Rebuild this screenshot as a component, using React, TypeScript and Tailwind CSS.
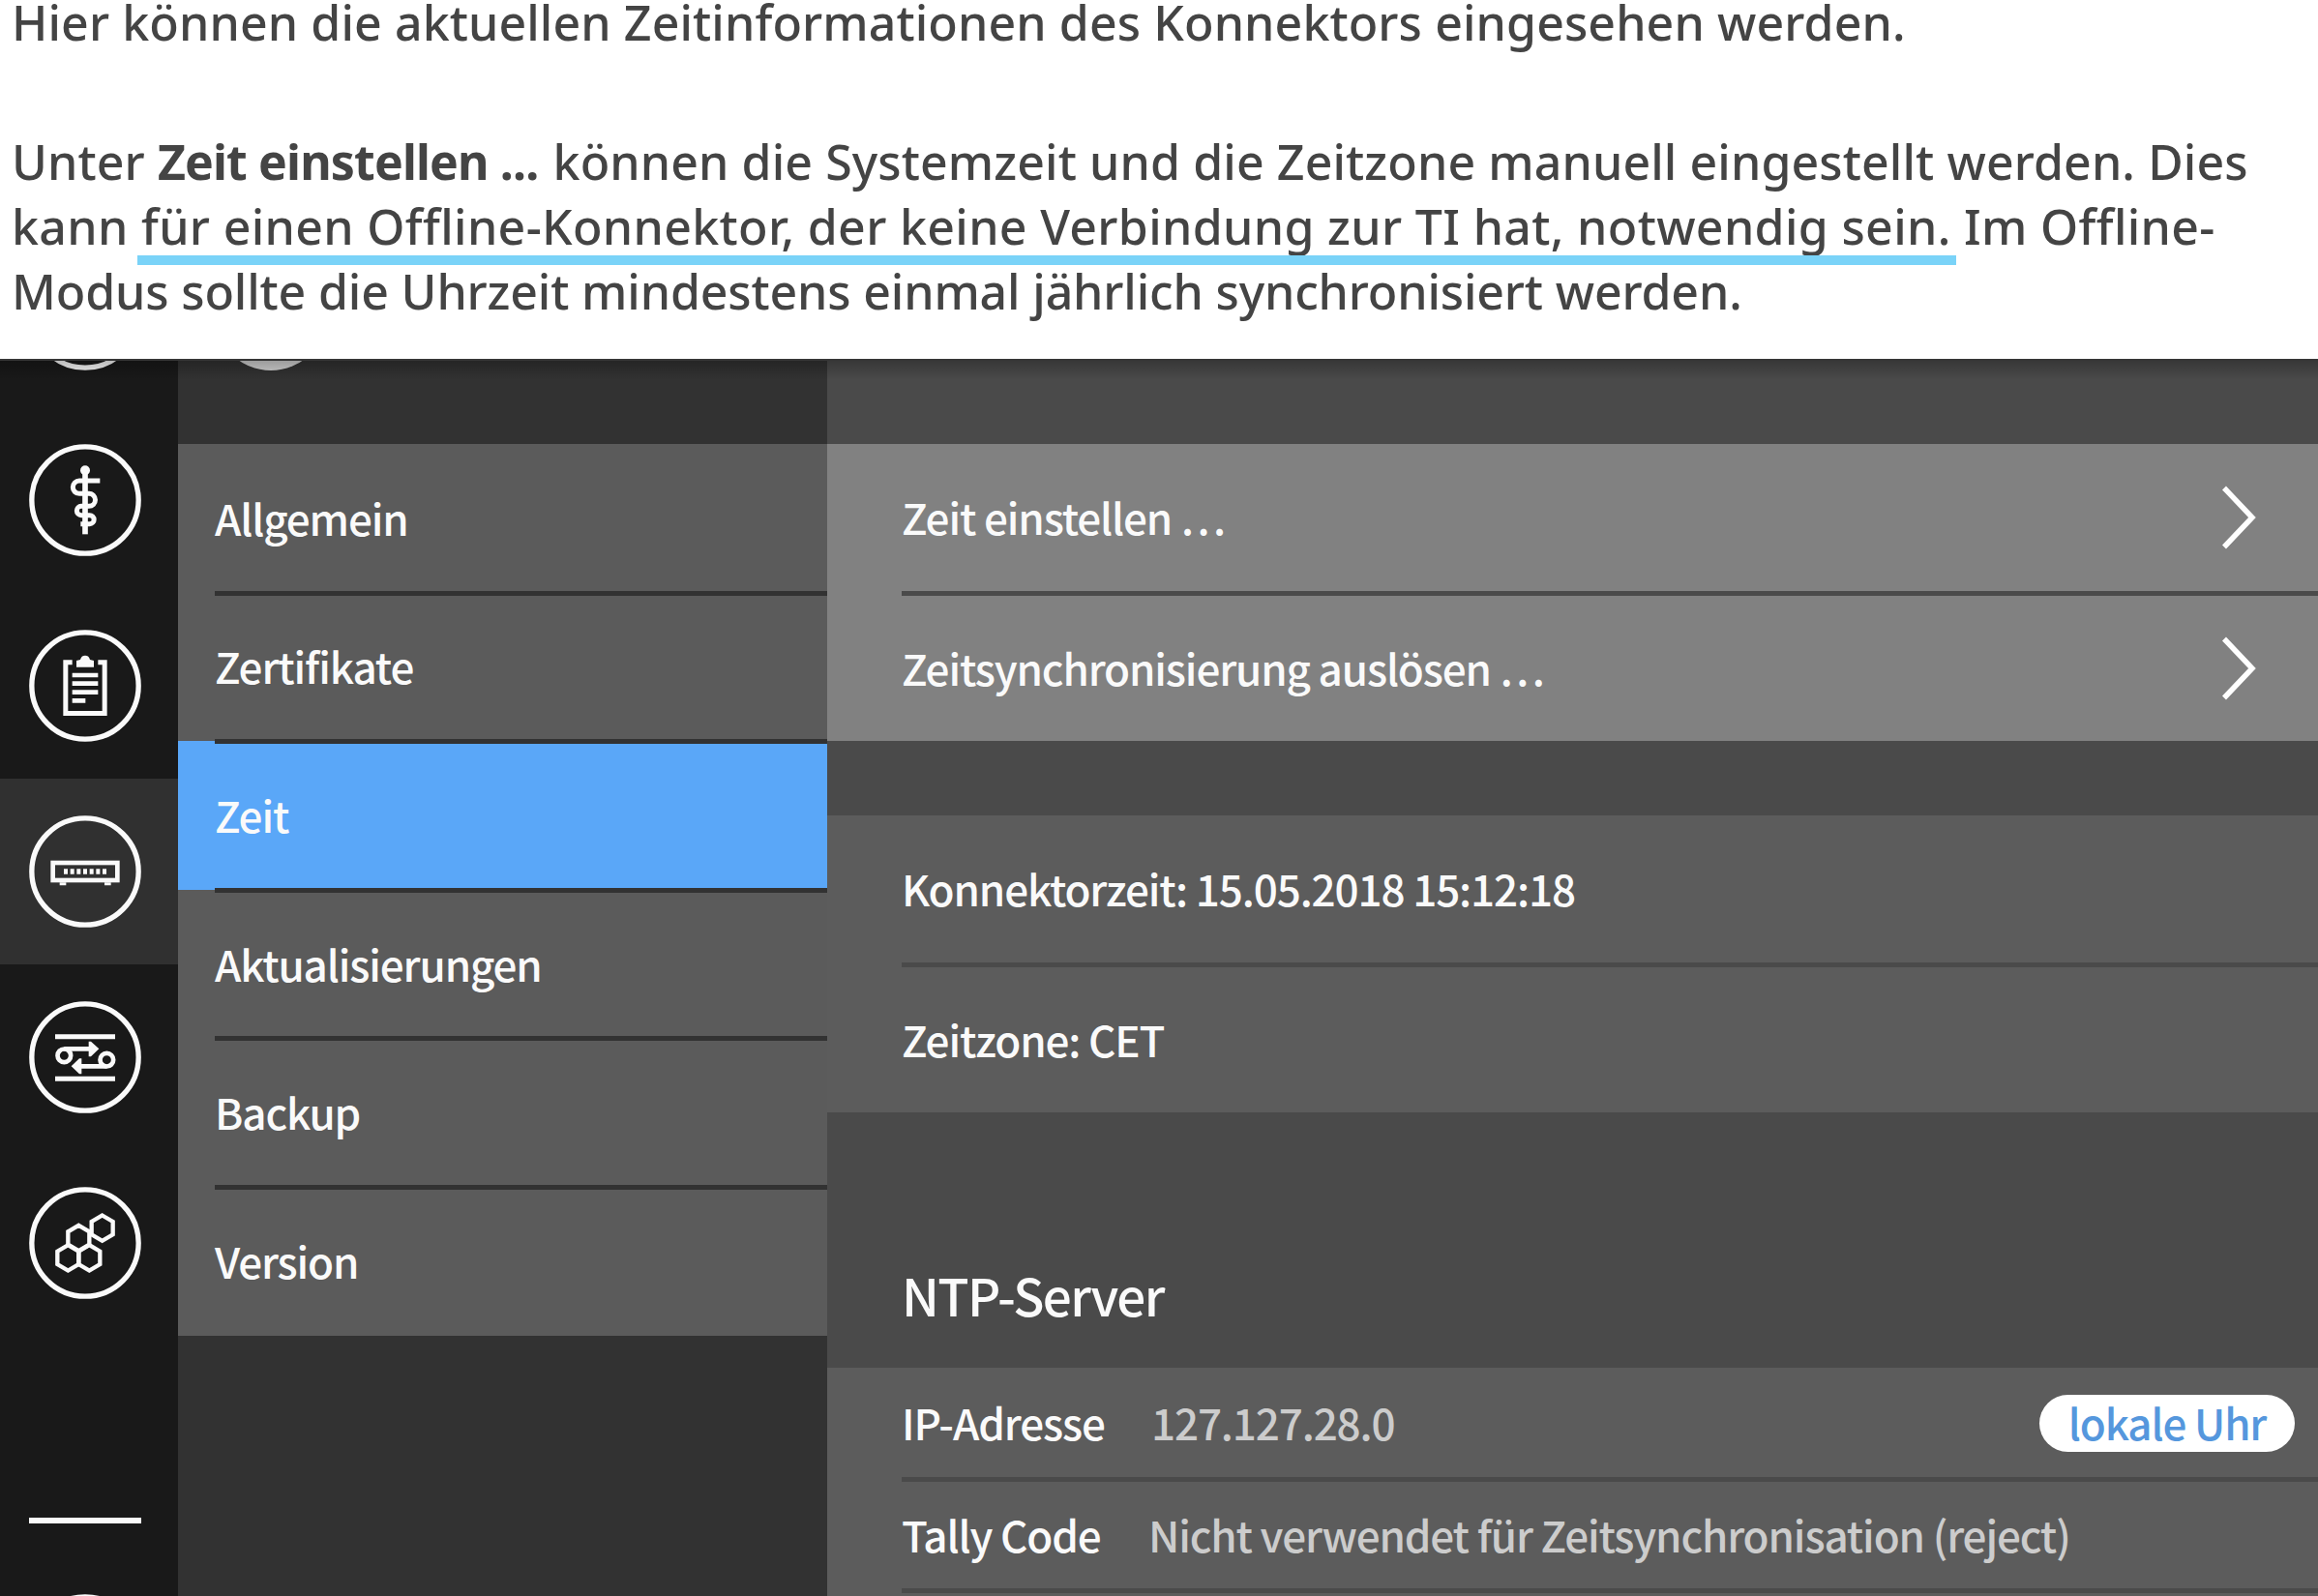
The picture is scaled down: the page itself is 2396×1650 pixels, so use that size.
import type { ReactNode } from "react";

function RoundIcon({ children }: { children?: ReactNode }) {
  return (
    <svg
      viewBox="-174 -174 348 348"
      className="block size-[116px] shrink-0"
      fill="none"
      stroke="#fafafa"
      strokeWidth={14}
    >
      <circle r={165.5} strokeWidth={16} />
      {children}
    </svg>
  );
}

const hexagon = "M0 -39.5L33 -20V20L0 39.5L-33 20V-20Z";

const railIcons: { name: string; active?: boolean; drawing: ReactNode }[] = [
  {
    name: "praxis",
    drawing: (
      <>
        <circle cy={-92} r={15} fill="#fafafa" stroke="none" />
        <path d="M0 -92V106" strokeWidth={17} />
        <path
          d="M46 -60H-18A20 20 0 0 0 -18 -20H12A19.5 19.5 0 0 1 12 19H-12A14 14 0 0 0 -12 47H14A13.5 13.5 0 0 1 14 74H-14"
          strokeWidth={15}
        />
      </>
    ),
  },
  {
    name: "protokoll",
    drawing: (
      <>
        <path d="M-40 -73H-60.5V85.500H60.500V-73H40" strokeWidth={15} />
        <path d="M-27 -58V-78L-15 -81Q-12 -94 0 -94Q12 -94 15 -81L27 -78V-58Z" fill="#fafafa" stroke="none" />
        <path d="M-40 -33H40M-40 -7H40M-40 20H40M-40 46H1" />
      </>
    ),
  },
  {
    name: "konnektor",
    active: true,
    drawing: (
      <>
        <rect x={-100} y={-27} width={200} height={54} />
        <path d="M-79 38H-59M60 38H80" strokeWidth={9} />
        <path d="M-66 0H66" strokeWidth={16} strokeDasharray="12 8" />
      </>
    ),
  },
  {
    name: "netzwerk",
    drawing: (
      <>
        <path d="M-93 -64H93M-93 67H93" strokeWidth={15} />
        <circle cx={-65} cy={-5} r={20.5} />
        <circle cx={67} cy={8} r={20.5} />
        <path d="M-65 -26H16M67 28H-16" />
        <path d="M11 -49H18L43 -26L18 -2H11ZM-11 4H-18L-43 28L-18 52H-11Z" fill="#fafafa" stroke="none" />
      </>
    ),
  },
  {
    name: "module",
    drawing: (
      <g strokeWidth={13}>
        <path d={hexagon} transform="translate(-20 -15)" />
        <path d={hexagon} transform="translate(-53 46)" />
        <path d={hexagon} transform="translate(13 46)" />
        <path d={hexagon} transform="translate(53 -46)" />
      </g>
    ),
  },
];

const menu = ["Allgemein", "Zertifikate", "Zeit", "Aktualisierungen", "Backup", "Version"];

function Chevron() {
  return (
    <svg viewBox="0 0 36 66" className="block h-[66px] w-9" fill="none" stroke="#fff" strokeWidth={5.5}>
      <path d="M3 2.500L32 33L3 63.500" />
    </svg>
  );
}

function Divider({ className }: { className: string }) {
  return <div className={`relative z-10 -mt-[2px] -mb-[3px] h-[5px] ${className}`} />;
}

function ActionRow({ label, className }: { label: string; className: string }) {
  return (
    <div className={`flex h-[153.6px] items-center justify-between bg-[#818181] pr-[64px] pl-[77px] ${className}`}>
      <span className="pb-px">{label}</span>
      <Chevron />
    </div>
  );
}

export default function App() {
  return (
    <div className="flex h-[1650px] w-[2396px] flex-col overflow-hidden bg-white">
      <header className="h-[371px] shrink-0 pl-[12px] font-['Noto_Sans',sans-serif] text-[50px] leading-[67px] font-medium whitespace-nowrap text-[#444]">
        <p className="leading-[47px] tracking-[0.11px]">
          Hier können die aktuellen Zeitinformationen des Konnektors eingesehen werden.
        </p>
        <p className="mt-[87px]">
          <span className="block tracking-[0.11px]">
            Unter <b className="mr-[2px] font-bold tracking-[-0.85px]">Zeit einstellen ...</b> können die Systemzeit und
            die Zeitzone manuell eingestellt werden. Dies
          </span>
          <span className="block tracking-[0.34px]">
            kann{" "}
            <span className="relative">
              für einen Offline-Konnektor, der keine Verbindung zur TI hat, notwendig sein.
              <span className="absolute -right-[5px] -bottom-[6px] -left-[4px] h-[10px] bg-[#7ad3f8]" />
            </span>{" "}
            Im Offline-
          </span>
          <span className="block tracking-[-0.14px]">
            Modus sollte die Uhrzeit mindestens einmal jährlich synchronisiert werden.
          </span>
        </p>
      </header>

      <div className="relative flex h-[1279px] font-['Noto_Sans_CJK_SC',sans-serif] text-[44px] leading-[60px] font-medium tracking-[-1.13px] whitespace-nowrap text-[#fafafa]">
        <nav className="flex w-[184px] shrink-0 flex-col overflow-hidden bg-[#191919]">
          <div className="-mt-[104px] h-[154px] shrink-0 pl-[30px]">
            <RoundIcon />
          </div>
          {railIcons.map((icon) => (
            <div
              key={icon.name}
              className={`flex h-[192px] shrink-0 items-center pl-[30px] ${icon.active ? "bg-[#303030]" : ""}`}
            >
              <RoundIcon>{icon.drawing}</RoundIcon>
            </div>
          ))}
          <div className="mt-[188px] ml-[30px] h-[6px] w-[116px] shrink-0 bg-[#fafafa]" />
          <div className="mt-[73px] shrink-0 pl-[30px]">
            <RoundIcon />
          </div>
        </nav>

        <aside className="w-[671px] shrink-0 overflow-hidden bg-[#323232]">
          <div className="h-[88px]">
            <div className="relative -top-[104px] ml-[38px] size-[116px] rounded-full bg-[#d0d0d0]" />
          </div>
          {menu.map((label, i) => (
            <div key={label}>
              {i > 0 && <Divider className="ml-[38px] bg-[#323232]" />}
              <div
                className={`flex h-[153.6px] items-center pb-[2px] pl-[38px] ${
                  label === "Zeit" ? "bg-[#5aa7f8]" : "bg-[#5b5b5b]"
                }`}
              >
                {label}
              </div>
            </div>
          ))}
        </aside>

        <main className="min-w-0 flex-1 bg-[#4a4a4a]">
          <div className="h-[88px]" />
          <ActionRow label="Zeit einstellen …" className="pb-[2px]" />
          <Divider className="ml-[77px] bg-[#4a4a4a]" />
          <ActionRow label="Zeitsynchronisierung auslösen …" className="pt-[3px]" />

          <div className="mt-[77px] bg-[#5c5c5c] pl-[77px]">
            <div className="flex h-[153.6px] items-center pb-[3px]">Konnektorzeit: 15.05.2018 15:12:18</div>
            <Divider className="bg-[#4a4a4a]" />
            <div className="flex h-[153.6px] items-center">Zeitzone: CET</div>
          </div>

          <h2 className="flex h-[264px] items-end pb-[36px] pl-[77px] text-[53px] leading-[80px] font-medium tracking-[-1.6px]">
            NTP-Server
          </h2>

          <div className="bg-[#5c5c5c] pl-[77px]">
            <div className="flex h-[115px] items-center pr-6 pb-px">
              <span className="w-[258px] pb-[2px]">IP-Adresse</span>
              <span className="flex-1 pb-[2px] text-[#ccc]">127.127.28.0</span>
              <span className="flex h-[59px] w-[264px] items-center justify-center rounded-full bg-white pb-[2px] text-[#5597dd]">
                lokale Uhr
              </span>
            </div>
            <Divider className="bg-[#4a4a4a]" />
            <div className="flex h-[115px] items-center pb-[2px]">
              <span className="w-[255px]">Tally Code</span>
              <span className="text-[#ccc]">Nicht verwendet für Zeitsynchronisation (reject)</span>
            </div>
            <Divider className="bg-[#4a4a4a]" />
            <div className="h-[6px]" />
          </div>
        </main>

        <div className="absolute inset-x-0 top-0">
          <div className="h-[2px] bg-[#363636]" />
          <div className="h-[20px] bg-linear-to-b from-black/25 to-transparent" />
        </div>
      </div>
    </div>
  );
}
